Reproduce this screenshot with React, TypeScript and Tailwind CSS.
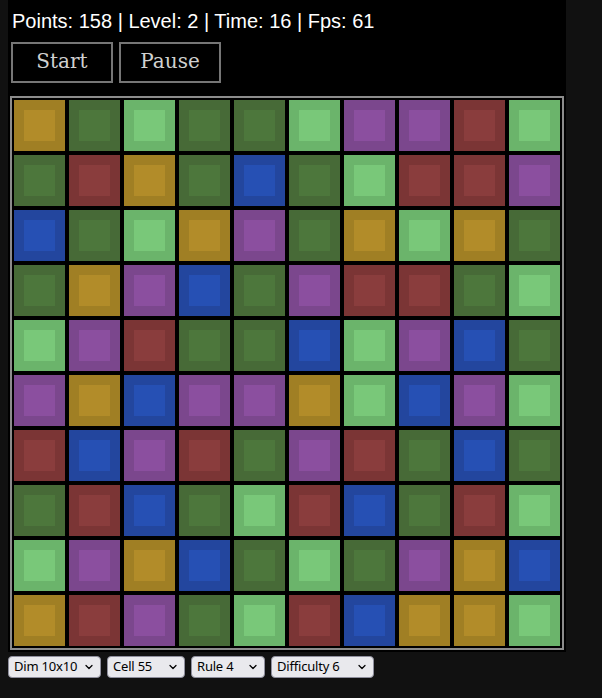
import { ChevronDown } from 'lucide-react'

type Tone = 'Y' | 'D' | 'L' | 'R' | 'P' | 'B'

const tones: Record<Tone, { outer: string; inner: string }> = {
  Y: { outer: 'bg-[#a07f24]', inner: 'bg-[#b28c29]' },
  D: { outer: 'bg-[#476a37]', inner: 'bg-[#4d773c]' },
  L: { outer: 'bg-[#6bb46b]', inner: 'bg-[#79c879]' },
  R: { outer: 'bg-[#7b3535]', inner: 'bg-[#8a3d3d]' },
  P: { outer: 'bg-[#7b478d]', inner: 'bg-[#8b4f9f]' },
  B: { outer: 'bg-[#23469e]', inner: 'bg-[#2650b4]' },
}

const board: string[] = [
  'YDLDDLPPRL',
  'DRYDBDLRRP',
  'BDLYPDYLYD',
  'DYPBDPRRDL',
  'LPRDDBLPBD',
  'PYBPPYLBPL',
  'RBPRDPRDBD',
  'DRBDLRBDRL',
  'LPYBDLDPYB',
  'YRPDLRBYYL',
]

const selects = [
  { label: 'Dim 10x10', width: 'w-[93px]' },
  { label: 'Cell 55', width: 'w-[78px]' },
  { label: 'Rule 4', width: 'w-[74px]' },
  { label: 'Difficulty 6', width: 'w-[103px]' },
]

function Cell({ tone }: { tone: Tone }) {
  const t = tones[tone]
  return (
    <div className="w-[55px] h-[55px] p-[2px]">
      <div className={`w-full h-full p-[10px] ${t.outer}`}>
        <div className={`w-full h-full ${t.inner}`} />
      </div>
    </div>
  )
}

export default function App() {
  return (
    <div className="min-h-[698px] bg-[#111111]">
      {/* Game panel */}
      <div className="ml-2 w-[558px] bg-black px-[2px] pb-[2px]">
        <p
          className="pl-[2px] pt-[9px] h-[34px] text-[20px] leading-[24px] text-white"
          style={{ fontFamily: '"Liberation Sans", Arial, sans-serif' }}
        >
          Points: 158 | Level: 2 | Time: 16 | Fps: 61
        </p>

        <div className="flex gap-[6px] pl-[1px] pt-[8px] pb-[13px]">
          {['Start', 'Pause'].map(b => (
            <button
              key={b}
              className="w-[102px] h-[41px] pb-[4px] border-2 border-[#767676] bg-black text-[20px] leading-[24px] text-[#d0d0d0]"
              style={{ fontFamily: '"DejaVu Serif", serif' }}
            >
              {b}
            </button>
          ))}
        </div>

        {/* Board */}
        <div className="w-[554px] border-2 border-[#8c8c8c] bg-black">
          <div className="grid grid-cols-10">
            {board.map((row, r) =>
              row.split('').map((c, i) => <Cell key={`${r}-${i}`} tone={c as Tone} />)
            )}
          </div>
        </div>
      </div>

      {/* Settings */}
      <div
        className="flex gap-[6px] pl-2 pt-1"
        style={{ fontFamily: '"Noto Sans", "DejaVu Sans", sans-serif' }}
      >
        {selects.map(s => (
          <div
            key={s.label}
            className={`flex items-center justify-between h-[22px] pl-[5px] pr-[5px] rounded-[4px] border border-[#8f8f9d] bg-[#e9e9ed] text-[13px] tracking-[-0.2px] text-black ${s.width}`}
          >
            <span>{s.label}</span>
            <ChevronDown size={12} strokeWidth={2.5} />
          </div>
        ))}
      </div>
    </div>
  )
}
